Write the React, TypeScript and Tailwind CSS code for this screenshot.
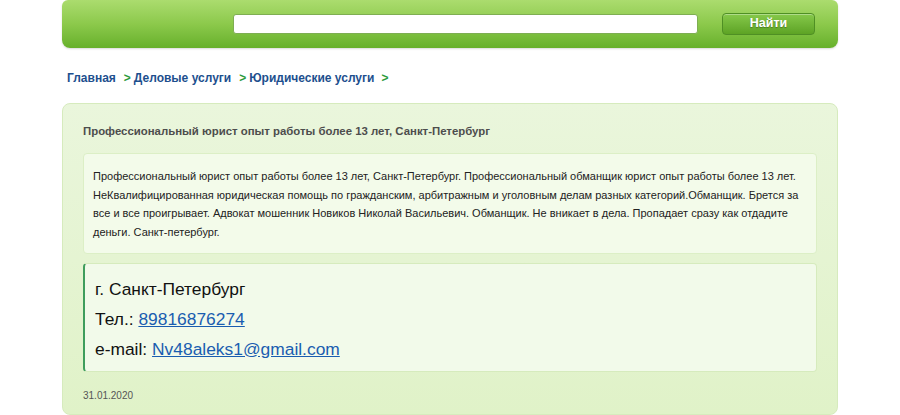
import React from 'react';

const App: React.FC = () => {
  return (
    <div className="min-h-[415px] bg-white font-['Liberation_Sans',Arial,sans-serif]">
      <div className="mx-auto w-[776px]">
        {/* Top search bar */}
        <div className="flex h-[48px] items-center rounded-b-[8px] rounded-t-[6px] bg-gradient-to-b from-[#abdc6e] via-[#8cc94b] to-[#66b02a] shadow-[0_1px_2px_rgba(0,0,0,0.15)]">
          <input
            type="text"
            className="ml-[171px] h-[20px] w-[465px] rounded-[3px] border border-[#7eae52] bg-white px-2 text-xs outline-none"
          />
          <button
            type="button"
            className="ml-[24px] mt-[-1px] h-[22px] w-[93px] rounded-[4px] border border-[#4f8f24] bg-gradient-to-b from-[#86c94a] to-[#5da324] text-[12.5px] font-bold text-white [text-shadow:0_1px_1px_rgba(0,0,0,0.3)] shadow-[inset_0_1px_0_rgba(255,255,255,0.35)]"
          >
            Найти
          </button>
        </div>

        {/* Breadcrumbs */}
        <div className="mt-[21px] flex h-[18px] items-center pl-[5px] text-[12px] font-bold text-[#1d4f8e]">
          <span>Главная</span>
          <span className="ml-[8px] text-[#2b9a3b]">&gt;</span>
          <span className="ml-[3px]">Деловые услуги</span>
          <span className="ml-[8px] text-[#2b9a3b]">&gt;</span>
          <span className="ml-[3px]">Юридические услуги</span>
          <span className="ml-[7px] text-[#2b9a3b]">&gt;</span>
        </div>

        {/* Listing card */}
        <div className="mt-[16px] rounded-[8px] border border-[#d6ebbd] bg-gradient-to-b from-[#eaf6dc] to-[#e0f2c8] px-[20px] pb-[12px] pt-[19px]">
          <h1 className="text-[11.4px] font-bold leading-[16px] text-[#4d4d4d]">
            Профессиональный юрист опыт работы более 13 лет, Санкт-Петербург
          </h1>

          <div className="mt-[14px] rounded-[4px] border border-[#dcefc6] bg-[#f3fbea] pb-[11px] pl-[9px] pr-[4px] pt-[13px] text-[11px] leading-[18.7px] text-[#222]">
            Профессиональный юрист опыт работы более 13 лет, Санкт-Петербург. Профессиональный обманщик юрист опыт работы более 13 лет.
            НеКвалифицированная юридическая помощь по гражданским, арбитражным и уголовным делам разных категорий.Обманщик. Брется за
            все и все проигрывает. Адвокат мошенник Новиков Николай Васильевич. Обманщик. Не вникает в дела. Пропадает сразу как отдадите
            деньги. Санкт-петербург.
          </div>

          <div className="mt-[9px] rounded-[4px] border border-l-2 border-[#d6ebbd] border-l-[#3f9d5c] bg-[#f2faea] pb-[7px] pl-[10px] pt-[10px] text-[17.4px] leading-[30px] text-[#111]">
            <div>г. Санкт-Петербург</div>
            <div>
              Тел.:{' '}
              <a href="#" className="text-[#1a5db0] underline">
                89816876274
              </a>
            </div>
            <div>
              e-mail:{' '}
              <a href="#" className="text-[#1a5db0] underline">
                Nv48aleks1@gmail.com
              </a>
            </div>
          </div>

          <div className="mt-[18px] text-[10px] leading-[12px] text-[#555]">31.01.2020</div>
        </div>
      </div>
    </div>
  );
};

export default App;
